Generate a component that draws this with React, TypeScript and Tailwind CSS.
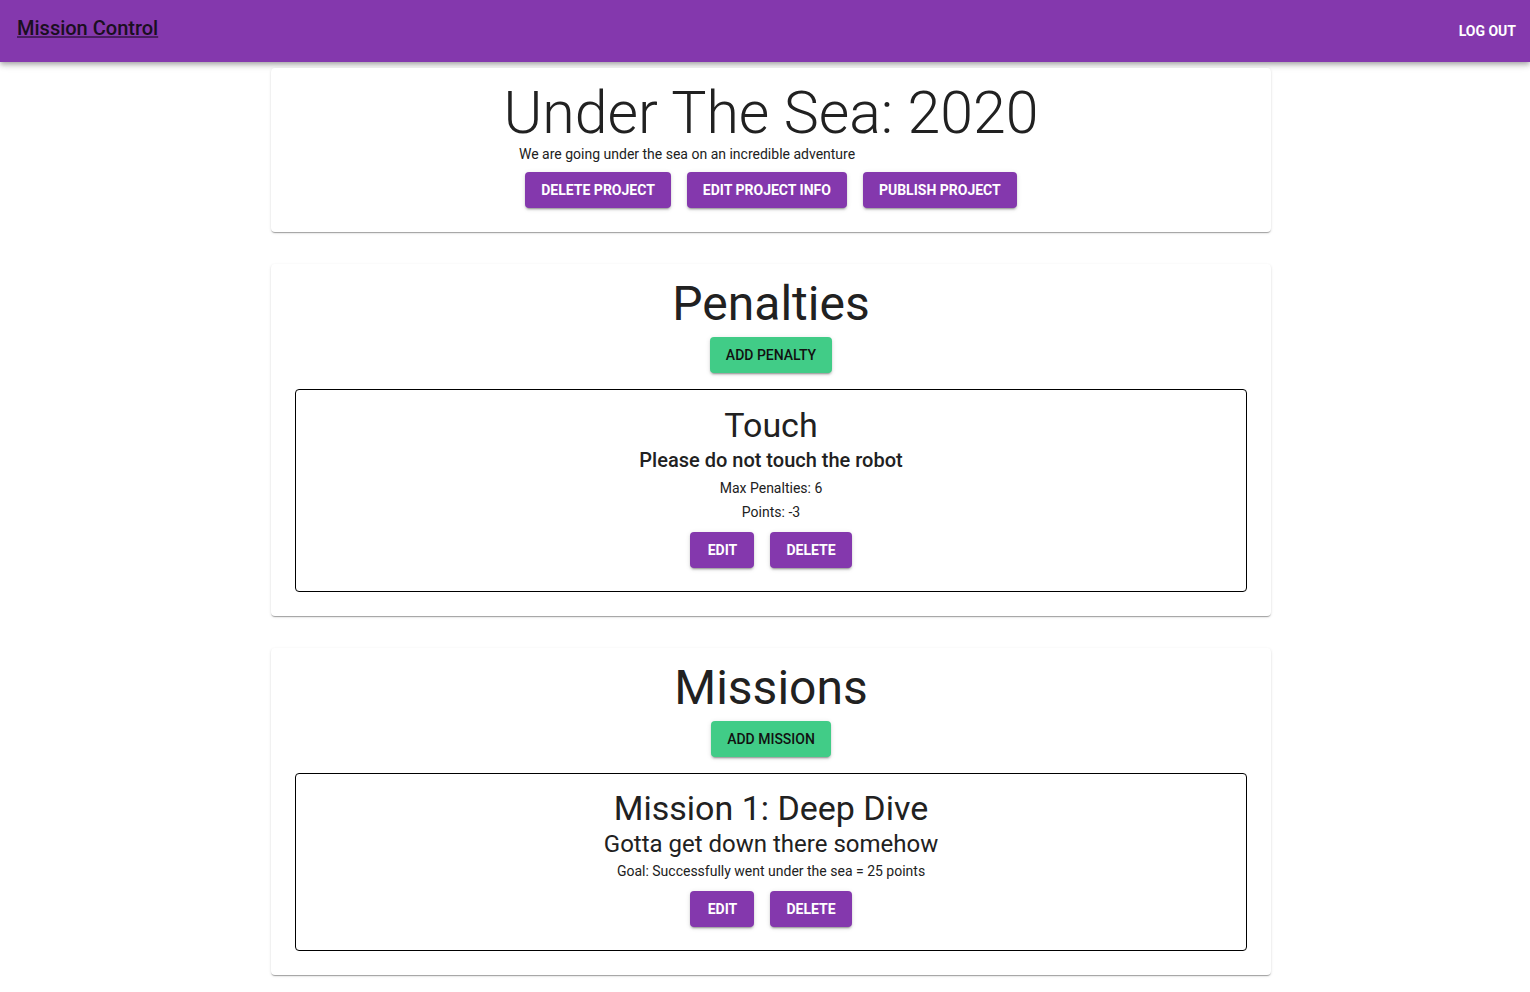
const font = { fontFamily: "Roboto, 'Liberation Sans', sans-serif" };

const raised =
  "shadow-[0_3px_1px_-2px_rgba(0,0,0,0.2),0_2px_2px_0_rgba(0,0,0,0.14),0_1px_5px_0_rgba(0,0,0,0.12)]";

function PurpleButton({ label }: { label: string }) {
  return (
    <button className={`h-9 min-w-16 rounded-[4px] bg-[#8438ad] px-4 text-[14px] font-bold uppercase text-white ${raised}`}>
      {label}
    </button>
  );
}

function GreenButton({ label }: { label: string }) {
  return (
    <button className={`h-9 rounded-[4px] bg-[#41cc87] px-4 text-[14px] font-medium uppercase text-[#111] ${raised}`}>
      {label}
    </button>
  );
}

function Card({ children, className }: { children: React.ReactNode; className?: string }) {
  return (
    <section
      className={`w-[1000px] rounded-[4px] bg-white px-6 text-center shadow-[0_2px_1px_-1px_rgba(0,0,0,0.2),0_1px_1px_0_rgba(0,0,0,0.14),0_1px_3px_0_rgba(0,0,0,0.12)] ${className ?? ""}`}
    >
      {children}
    </section>
  );
}

export default function App() {
  return (
    <div className="min-h-screen bg-white text-[#212121]" style={font}>
      <header className="flex h-[62px] items-center justify-between bg-[#8438ad] shadow-[0_2px_4px_-1px_rgba(0,0,0,0.2),0_4px_5px_0_rgba(0,0,0,0.14),0_1px_10px_0_rgba(0,0,0,0.12)]">
        <a href="#" className="mb-[6px] ml-[17px] text-[20px] font-medium text-[#1a0f20] underline decoration-[#4a1d62]">
          Mission Control
        </a>
        <button className="mr-[14px] text-[14px] font-bold uppercase text-white">Log Out</button>
      </header>

      <main className="flex flex-col items-center pb-10 pl-[12px] pt-[6px]">
        <Card className="pb-6 pt-[14px]">
          <h1 className="whitespace-nowrap text-[59px] font-light leading-[62px]">Under The Sea: 2020</h1>
          <p className="mx-auto w-[532px] pl-[14px] text-left text-[14px] leading-[20px]">
            We are going under the sea on an incredible adventure
          </p>
          <div className="mt-[8px] flex justify-center gap-4">
            <PurpleButton label="Delete Project" />
            <PurpleButton label="Edit Project Info" />
            <PurpleButton label="Publish Project" />
          </div>
        </Card>

        <Card className="mt-8 pb-6 pt-[12px]">
          <h2 className="text-[48px] leading-[56px]">Penalties</h2>
          <div className="mt-[5px] flex justify-center">
            <GreenButton label="Add Penalty" />
          </div>
          <div className="mt-4 rounded-[4px] border border-black pb-[23px] pt-[14px]">
            <h3 className="text-[34px] leading-[42px]">Touch</h3>
            <h4 className="text-[20px] font-medium leading-[28px]">Please do not touch the robot</h4>
            <p className="mt-1 text-[14px] leading-[20px]">Max Penalties: 6</p>
            <p className="mt-1 text-[14px] leading-[20px]">Points: -3</p>
            <div className="mt-[10px] flex justify-center gap-4">
              <PurpleButton label="Edit" />
              <PurpleButton label="Delete" />
            </div>
          </div>
        </Card>

        <Card className="mt-8 pb-6 pt-[12px]">
          <h2 className="text-[48px] leading-[56px]">Missions</h2>
          <div className="mt-[5px] flex justify-center">
            <GreenButton label="Add Mission" />
          </div>
          <div className="mt-4 rounded-[4px] border border-black pb-[23px] pt-[14px]">
            <h3 className="text-[34px] leading-[40px]">Mission 1: Deep Dive</h3>
            <h4 className="text-[24px] leading-[32px]">Gotta get down there somehow</h4>
            <p className="mt-[1px] text-[14px] leading-[20px]">
              Goal: Successfully went under the sea = 25 points
            </p>
            <div className="mt-[10px] flex justify-center gap-4">
              <PurpleButton label="Edit" />
              <PurpleButton label="Delete" />
            </div>
          </div>
        </Card>
      </main>
    </div>
  );
}
